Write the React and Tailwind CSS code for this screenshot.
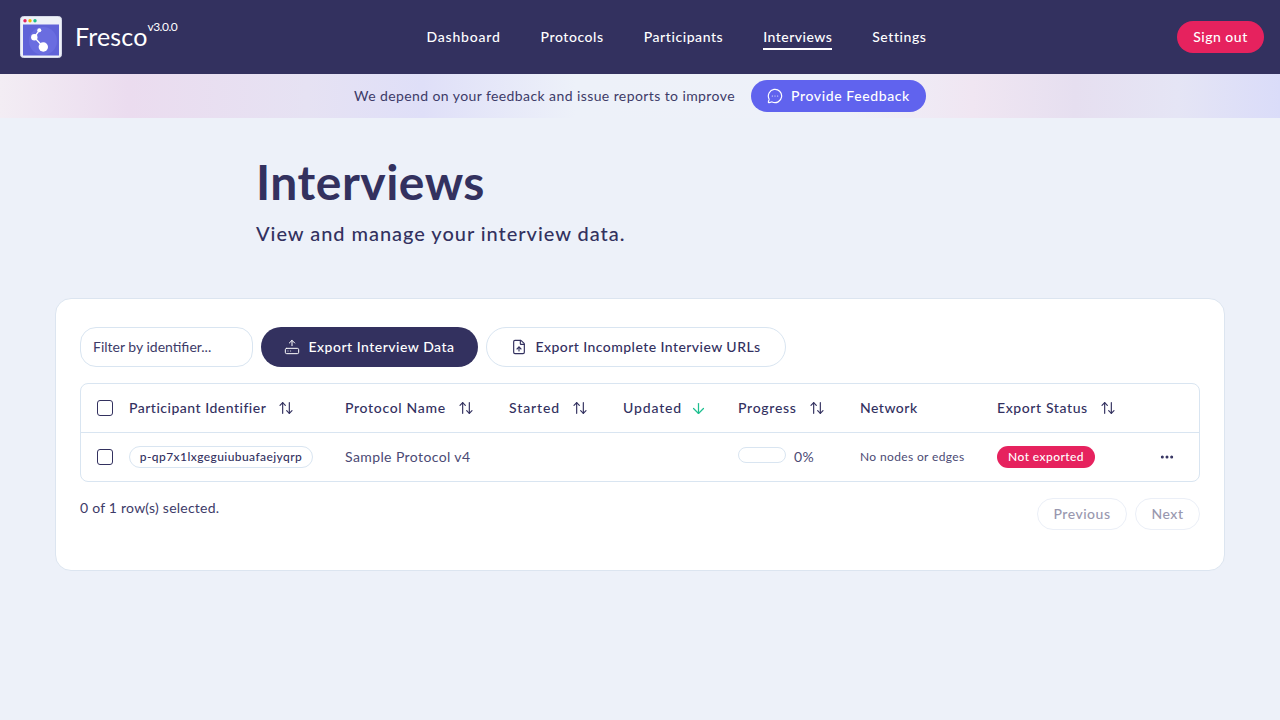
import React from "react";
import { ArrowUpDown, ArrowDown, MessageCircleMore, FileUp, HardDriveUpload, Ellipsis } from "lucide-react";

const rowGrid = "grid grid-cols-[48px_216px_164px_114px_115px_122px_137px_140px_1fr] items-center";

function Logo() {
  return (
    <svg width="42" height="42" viewBox="0 0 42 42" className="shrink-0">
      <rect x="0.5" y="0.5" width="41" height="41" rx="3" fill="#eef1f8" stroke="#d5d9e8" />
      <rect x="3" y="8.5" width="36" height="31" fill="#6063d8" />
      <circle cx="23" cy="25" r="14" fill="#6a6de0" />
      <circle cx="5" cy="4.7" r="1.7" fill="#e6225e" />
      <circle cx="10" cy="4.7" r="1.7" fill="#f2b705" />
      <circle cx="15" cy="4.7" r="1.7" fill="#1cbf8f" />
      <path d="M19.3 14.3 L14.3 21.3 L23.3 31" stroke="#fff" strokeWidth="1.4" fill="none" />
      <circle cx="19.3" cy="14.3" r="2" fill="#fff" />
      <circle cx="14.3" cy="21.3" r="3.2" fill="#fff" />
      <circle cx="23.3" cy="31" r="4.7" fill="#fff" />
    </svg>
  );
}

function Head({ label, children, track = "tracking-[0.6px]" }) {
  return (
    <div className={`flex items-center gap-3 text-sm font-medium text-[#33315f] ${track}`}>
      <span>{label}</span>
      {children}
    </div>
  );
}

const Sort = () => <ArrowUpDown size={16} strokeWidth={1.75} className="text-[#33315f]" />;

export default function App() {
  return (
    <div className="min-h-[720px] bg-[#edf1f9] font-['Lato',sans-serif] text-[#33315f]">
      <header className="flex h-[74px] items-center justify-between bg-[#33315f] pl-5 pr-4 text-white">
        <div className="flex w-[156px] items-center">
          <Logo />
          <span className="ml-[13px] text-[25px] tracking-[0.15px]">Fresco</span>
          <span className="mb-5 text-xs tracking-[-0.5px]">v3.0.0</span>
        </div>
        <nav className="flex items-center gap-10 text-sm font-medium tracking-[0.57px]">
          <span className="tracking-[0.79px]">Dashboard</span>
          <span>Protocols</span>
          <span>Participants</span>
          <span className="border-b-2 border-white pb-px pt-[3px] tracking-[0.47px]">Interviews</span>
          <span>Settings</span>
        </nav>
        <button className="h-8 w-[87px] rounded-full bg-[#e6225e] text-sm font-medium tracking-[0.5px] text-white">Sign out</button>
      </header>

      <div className="flex h-11 items-center justify-center gap-4 bg-[linear-gradient(90deg,#f3edf4_0%,#ebdcef_10%,#e6e2f3_24%,#dfdff8_33%,#edf1f9_45%,#eef1f9_66%,#f0e6f2_76%,#e6dff0_84%,#e5e5f5_92%,#dadcf9_100%)]">
        <span className="text-sm tracking-[0.41px] text-[#3d3b68]">We depend on your feedback and issue reports to improve</span>
        <button className="flex h-8 w-[175px] items-center justify-center gap-2 rounded-full bg-[#6063ee] text-sm font-medium tracking-[0.6px] text-white">
          <MessageCircleMore size={16} strokeWidth={1.75} />
          Provide Feedback
        </button>
      </div>

      <section className="px-64 pb-[51px] pt-9">
        <h1 className="text-[48px] font-bold leading-[56px] tracking-[0.5px] text-[#33315f]">Interviews</h1>
        <p className="mt-[9px] text-xl font-medium leading-7 tracking-[0.96px] text-[#33315f]">View and manage your interview data.</p>
      </section>

      <main className="mx-[55px] h-[273px] rounded-2xl border border-[#dce5f0] bg-white px-6 pt-7">
        <div className="flex gap-2">
          <input
            readOnly
            placeholder="Filter by identifier..."
            className="h-10 w-[173px] rounded-2xl border border-[#d9e5f1] bg-white px-3 pb-px text-sm tracking-[0px] text-[#3d3b68] outline-none placeholder:text-[#3d3b68]"
          />
          <button className="flex h-10 w-[217px] items-center justify-center gap-2 rounded-full bg-[#33315f] text-sm font-medium tracking-[0.5px] text-white">
            <HardDriveUpload size={16} strokeWidth={1.5} />
            Export Interview Data
          </button>
          <button className="flex h-10 w-[300px] items-center justify-center gap-2 rounded-full border border-[#d9e5f1] bg-white text-sm font-medium tracking-[0.44px] text-[#33315f]">
            <FileUp size={16} strokeWidth={1.75} />
            Export Incomplete Interview URLs
          </button>
        </div>

        <div className="mt-4 h-[99px] rounded-lg border border-[#d9e5f1]">
          <div className={`${rowGrid} h-[49px] border-b border-[#d9e5f1]`}>
            <div className="pl-4"><div className="h-4 w-4 rounded-[3px] border border-[#33315f]" /></div>
            <Head label="Participant Identifier" track="tracking-[0.5px]"><Sort /></Head>
            <Head label="Protocol Name" track="tracking-[0.68px]"><Sort /></Head>
            <Head label="Started" track="tracking-[0.9px]"><Sort /></Head>
            <Head label="Updated" track="tracking-[0.85px]">
              <ArrowDown size={17} strokeWidth={1.75} className="-ml-1 text-[#1cbf8f]" />
            </Head>
            <Head label="Progress" track="tracking-[0.72px]"><Sort /></Head>
            <Head label="Network" track="tracking-[0.5px]" />
            <Head label="Export Status"><Sort /></Head>
            <div />
          </div>
          <div className={`${rowGrid} h-12`}>
            <div className="pl-4"><div className="h-4 w-4 rounded-[3px] border border-[#33315f]" /></div>
            <div className="flex">
              <span className="flex h-[22px] w-[184px] items-center justify-center rounded-full border border-[#d9e5f1] text-xs font-medium tracking-[0.42px]">p-qp7x1lxgeguiubuafaejyqrp</span>
            </div>
            <div className="text-sm tracking-[0.4px] text-[#4b4a74]">Sample Protocol v4</div>
            <div />
            <div />
            <div className="flex items-center gap-2">
              <div className="mb-1 h-4 w-12 rounded-full border border-[#d9e5f1] bg-white" />
              <span className="text-sm tracking-[0.5px] text-[#4b4a74]">0%</span>
            </div>
            <div className="text-xs tracking-[0.36px] text-[#4b4a74]">No nodes or edges</div>
            <div className="flex">
              <span className="flex h-[22px] w-[98px] items-center justify-center rounded-full bg-[#e6225e] text-xs font-medium tracking-[0.42px] text-white">Not exported</span>
            </div>
            <div className="flex justify-end pr-6">
              <Ellipsis size={16} strokeWidth={2.5} className="text-[#33315f]" />
            </div>
          </div>
        </div>

        <div className="mt-4 flex items-start justify-between">
          <span className="text-sm tracking-[0.23px] text-[#3d3b68]">0 of 1 row(s) selected.</span>
          <div className="flex gap-2">
            <button className="h-8 w-[90px] rounded-full border border-[#ebeff7] text-sm font-medium tracking-[0.5px] text-[#9998af]">Previous</button>
            <button className="h-8 w-[65px] rounded-full border border-[#ebeff7] text-sm font-medium tracking-[0.5px] text-[#9998af]">Next</button>
          </div>
        </div>
      </main>
    </div>
  );
}
